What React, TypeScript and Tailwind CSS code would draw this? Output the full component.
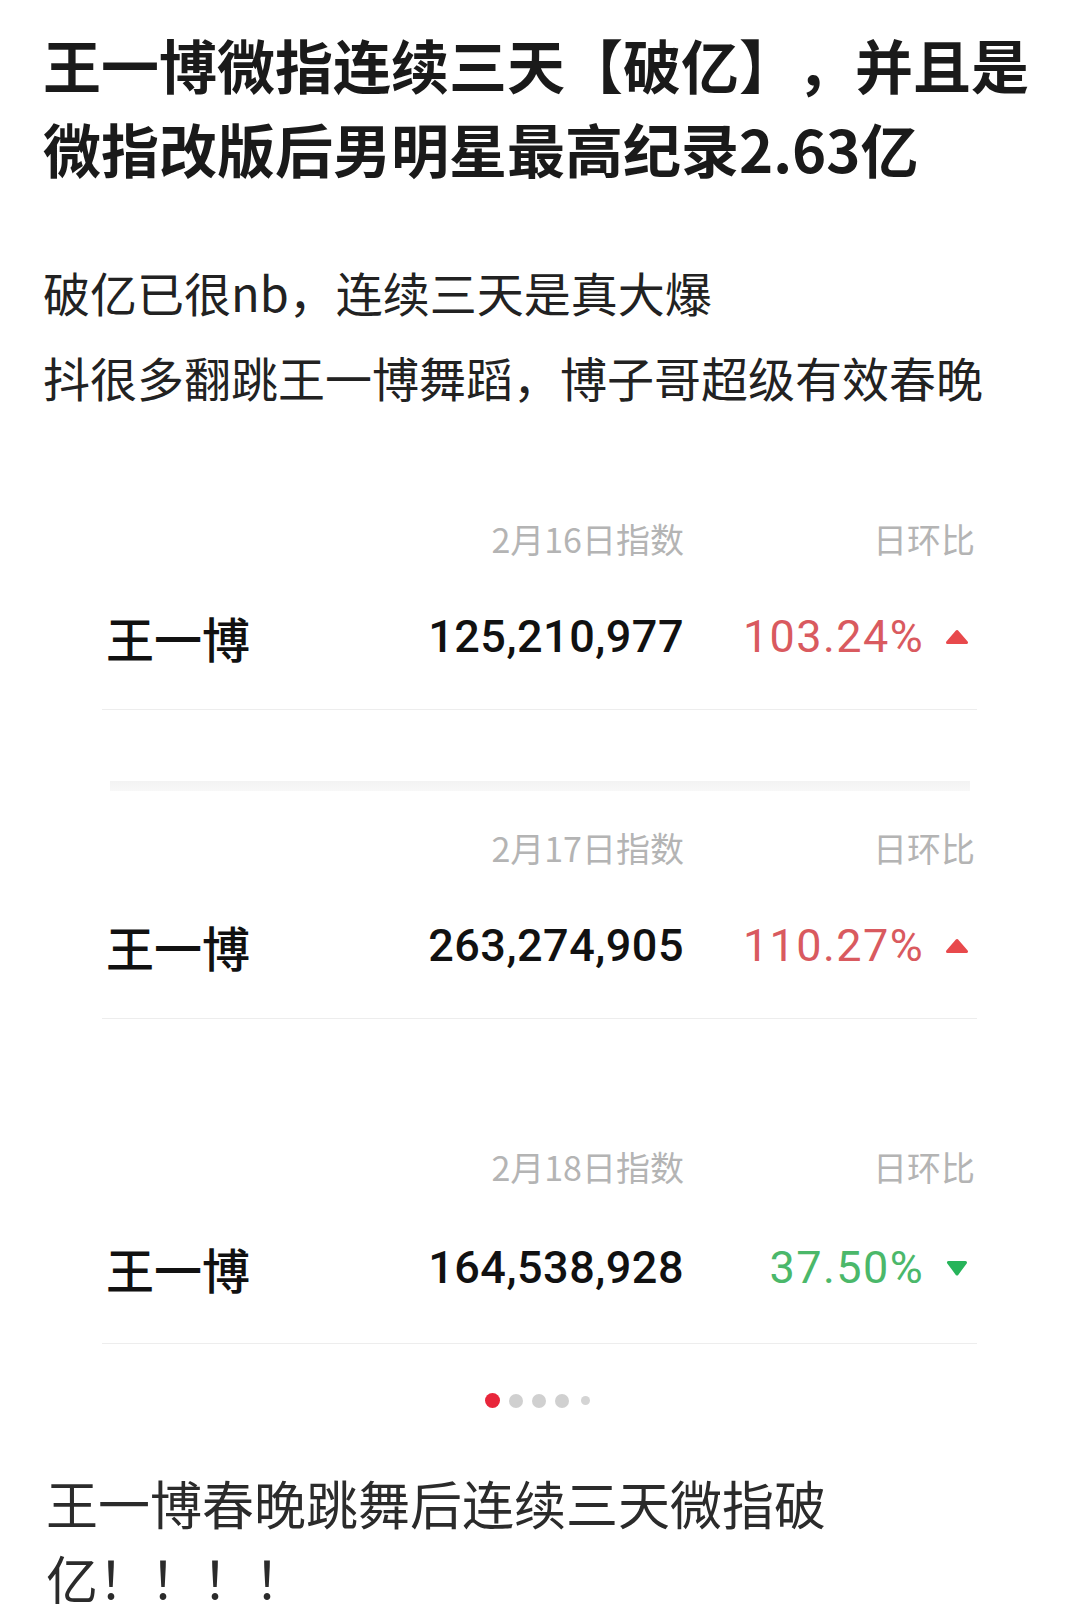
import React from 'react';

const cjk = '"Noto Sans CJK SC", "Noto Sans", sans-serif';
const num = 'Roboto, "Liberation Sans", "Noto Sans CJK SC", sans-serif';

type Row = {
  date: string;
  value: string;
  change: string;
  up: boolean;
};

const Triangle = ({ up }: { up: boolean }) => (
  <svg width="24" height="16" viewBox="0 0 24 16" className="ml-[21px] mr-[8px]">
    {up ? (
      <polygon
        points="12,2.5 21.5,13.5 2.5,13.5"
        fill="#e8494c"
        stroke="#e8494c"
        strokeWidth="3"
        strokeLinejoin="round"
      />
    ) : (
      <polygon
        points="3.5,2.5 20.5,2.5 12,14"
        fill="#27b45a"
        stroke="#27b45a"
        strokeWidth="3"
        strokeLinejoin="round"
      />
    )}
  </svg>
);

const IndexCard = ({ row, headerGap, dividerGap }: { row: Row; headerGap: string; dividerGap: string }) => (
  <div className="mx-[102px] w-[875px]">
    <div className="flex h-[50px] items-center text-[34px] text-[#b4b4b4]" style={{ fontFamily: cjk }}>
      <div className="w-[582px] text-right">{row.date}</div>
      <div className="flex-1 pr-[2px] text-right">日环比</div>
    </div>
    <div className={`flex h-[60px] items-center ${headerGap}`}>
      <div className="flex w-[582px] items-center justify-between">
        <span className="pl-[4px] text-[48px] font-medium text-[#111]" style={{ fontFamily: cjk }}>
          王一博
        </span>
        <span className="text-[45px] font-medium tracking-[0.5px] text-[#111]" style={{ fontFamily: num }}>
          {row.value}
        </span>
      </div>
      <div className="flex flex-1 items-center justify-end">
        <span
          className={
            row.up
              ? 'text-[45px] tracking-[1.4px] text-[#d95a5f]'
              : 'text-[45px] tracking-[1.4px] text-[#4bb86a]'
          }
          style={{ fontFamily: num }}
        >
          {row.change}
        </span>
        <Triangle up={row.up} />
      </div>
    </div>
    <div className={`h-px bg-[#ededed] ${dividerGap}`} />
  </div>
);

export default function App() {
  const rows: Row[] = [
    { date: '2月16日指数', value: '125,210,977', change: '103.24%', up: true },
    { date: '2月17日指数', value: '263,274,905', change: '110.27%', up: true },
    { date: '2月18日指数', value: '164,538,928', change: '37.50%', up: false },
  ];

  return (
    <div
      className="h-[1604px] w-[1080px] overflow-hidden bg-white [text-spacing-trim:space-all]"
      style={{ fontFamily: cjk }}
    >
      <h1 className="px-[43px] pt-[22px] text-[58px] font-bold leading-[84px] text-[#1a1a1a]">
        王一博微指连续三天【破亿】，并且是
        <br />
        微指改版后男明星最高纪录2.63亿
      </h1>

      <div className="mt-[59px] px-[43px] text-[47px] leading-[85px] text-[#222]">
        <p>破亿已很nb，连续三天是真大爆</p>
        <p>抖很多翻跳王一博舞蹈，博子哥超级有效春晚</p>
      </div>

      <div className="mt-[94px]">
        <IndexCard row={rows[0]} headerGap="mt-[44px]" dividerGap="mt-[42px]" />
      </div>

      <div className="mx-[110px] mt-[71px] h-[10px] bg-gradient-to-b from-[#f3f3f3] to-[#f8f8f8]" />

      <div className="mt-[31px]">
        <IndexCard row={rows[1]} headerGap="mt-[44px]" dividerGap="mt-[42px]" />
      </div>

      <div className="mt-[122px]">
        <IndexCard row={rows[2]} headerGap="mt-[47px]" dividerGap="mt-[45px]" />
      </div>

      <div className="mt-[49px] flex h-[15px] items-center justify-center gap-[9px] pr-[6px]">
        <span className="h-[15px] w-[15px] rounded-full bg-[#e8263b]" />
        <span className="h-[14px] w-[14px] rounded-full bg-[#d0d0d0]" />
        <span className="h-[14px] w-[14px] rounded-full bg-[#d0d0d0]" />
        <span className="h-[14px] w-[14px] rounded-full bg-[#d0d0d0]" />
        <span className="ml-[3px] h-[9px] w-[9px] rounded-full bg-[#d4d4d4]" />
      </div>

      <div className="mt-[57px] px-[46px] text-[52px] leading-[75px] text-[#2b2b2b]">
        <p>王一博春晚跳舞后连续三天微指破</p>
        <p>亿！！！！</p>
      </div>
    </div>
  );
}
